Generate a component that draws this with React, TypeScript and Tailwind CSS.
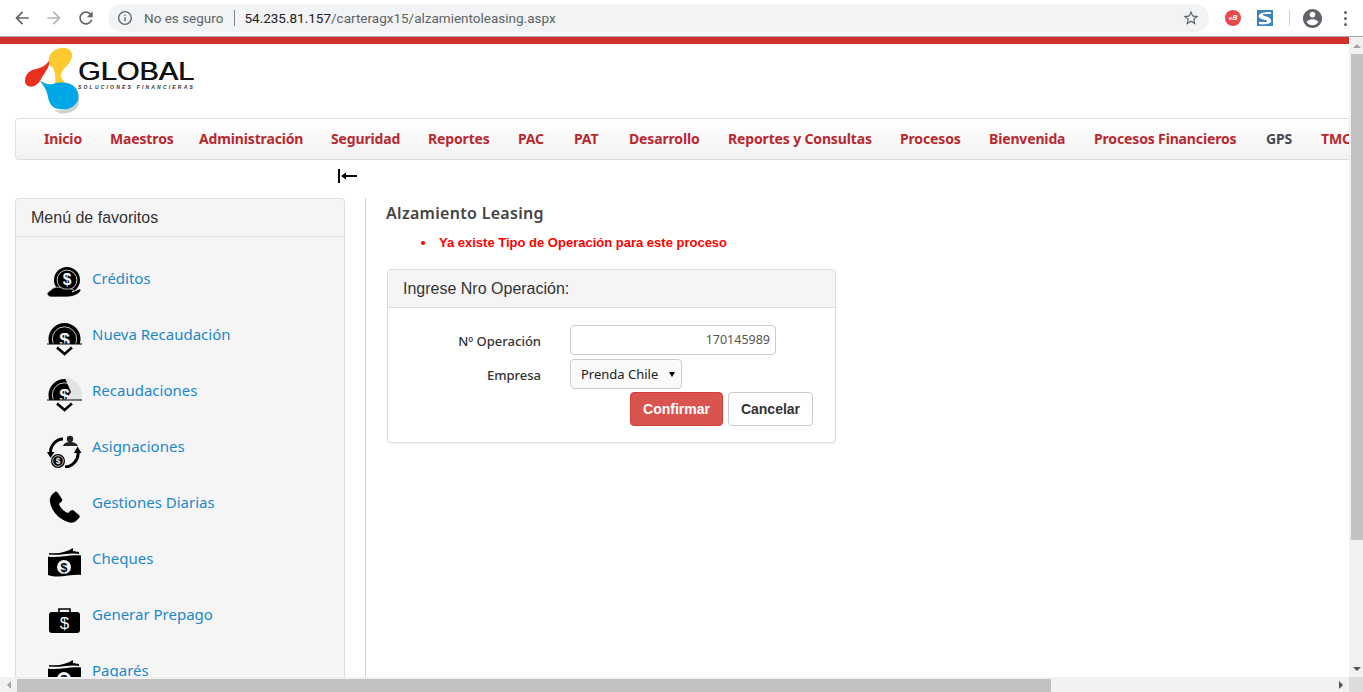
import React, { FC, ReactNode } from "react";

const trebuchet = "font-['Noto_Sans',sans-serif]";

const menuItems = [
  { label: "Inicio", width: "w-[37px]" },
  { label: "Maestros", width: "w-[60px]" },
  { label: "Administración", width: "w-[103px]" },
  { label: "Seguridad", width: "w-[68px]" },
  { label: "Reportes", width: "w-[61px]" },
  { label: "PAC", width: "w-[27px]" },
  { label: "PAT", width: "w-[26px]" },
  { label: "Desarrollo", width: "w-[70px]" },
  { label: "Reportes y Consultas", width: "w-[143px]" },
  { label: "Procesos", width: "w-[60px]" },
  { label: "Bienvenida", width: "w-[76px]" },
  { label: "Procesos Financieros", width: "w-[143px]" },
  { label: "GPS", width: "w-[26px]", dark: true },
  { label: "TMC", width: "w-[30px]" },
];

const Coin: FC<{ cx: number; cy: number; r: number }> = ({ cx, cy, r }) => (
  <g>
    <circle cx={cx} cy={cy} r={r} fill="#000" />
    <circle cx={cx} cy={cy} r={r * 0.76} fill="none" stroke="#f5f5f5" strokeWidth="0.8" />
    <text x={cx} y={cy + r * 0.42} textAnchor="middle" fontSize={r * 1.2} fontWeight="700" fill="#f5f5f5" fontFamily="Liberation Sans">$</text>
  </g>
);

const IconCreditos = () => (
  <svg width="36" height="34" viewBox="0 0 36 34">
    <Coin cx={20} cy={14} r={13} />
    <path d="M0 27 L5 23 C9 20 13 21 17 23 L25 23 C27 23 27 25 25 26 L30 24 C33 22 35 23 33 26 C29 30 24 31 18 31 L4 31 C2 31 0 29 0 27 Z" fill="#000" stroke="#f5f5f5" strokeWidth="0.7" />
  </svg>
);

const IconRecaudacion: FC<{ faded?: boolean }> = ({ faded }) => (
  <svg width="36" height="34" viewBox="0 0 36 34">
    <defs>
      <clipPath id={faded ? "half-a" : "half-b"}>
        <rect x="0" y="0" width="36" height="22" />
      </clipPath>
    </defs>
    <g clipPath={`url(#${faded ? "half-a" : "half-b"})`}>
      <Coin cx={17.5} cy={17} r={16} />
      {faded && <path d="M18 0 A17 17 0 0 1 35 17 L35 23 L18 23 L24 14 Z" fill="#e4e4e4" />}
    </g>
    <path d="M0 22 H35" stroke="#000" strokeWidth="1.2" />
    <path d="M10 25.5 L17.5 32 L25 25.5" fill="none" stroke="#000" strokeWidth="2.6" />
  </svg>
);

const IconAsignaciones = () => (
  <svg width="36" height="34" viewBox="0 0 36 34">
    <path d="M3.5 19 C3 12 9 5 16 5" fill="none" stroke="#000" strokeWidth="3" />
    <path d="M0 18 L7.5 18 L3.5 24 Z" fill="#000" />
    <path d="M31 18 C32 26 25 33 18 33" fill="none" stroke="#000" strokeWidth="3" />
    <path d="M27 19 L34.5 19 L30.5 12.5 Z" fill="#000" />
    <circle cx="23" cy="5" r="3.2" fill="#222" />
    <path d="M16 12 C17 6.5 29 6.5 31 12 Z" fill="#222" />
    <Coin cx={11} cy={27} r={7} />
  </svg>
);

const IconTelefono = () => (
  <svg width="34" height="34" viewBox="0 0 34 34">
    <path d="M8 2 C9 1 10 2 11 3 L15 9 C16 11 14 12 12 14 C13 17 17 22 21 23 C23 21 24 20 26 20 L32 25 C33 26 33 27 32 28 L29 31 C27 33 24 33 21 32 C12 29 5 22 3 12 C2 8 5 4 8 2 Z" fill="#000" />
  </svg>
);

const IconBilletes = () => (
  <svg width="35" height="34" viewBox="0 0 35 34">
    <path d="M2 7 C12 8 20 6 26 2 L26 5 L32 6 L32 8 C24 6 12 10 2 8.5 Z" fill="#000" />
    <path d="M1 10.5 C10 12.5 23 8 34 9.5 L34 29 C24 28 11 33 1 29 Z" fill="#000" />
    <circle cx="17" cy="21" r="7" fill="#f5f5f5" />
    <text x="17" y="25.5" textAnchor="middle" fontSize="12.5" fontWeight="700" fill="#000" fontFamily="Liberation Sans">$</text>
  </svg>
);

const IconMaletin = () => (
  <svg width="35" height="34" viewBox="0 0 35 34">
    <path d="M12 10 V7 H23 V10" fill="none" stroke="#000" strokeWidth="1.6" />
    <rect x="2" y="10" width="31" height="21" rx="3" fill="#000" />
    <text x="17.5" y="27" textAnchor="middle" fontSize="17" fill="#f5f5f5" fontFamily="Liberation Sans">$</text>
  </svg>
);

const favorites: { label: string; icon: ReactNode }[] = [
  { label: "Créditos", icon: <IconCreditos /> },
  { label: "Nueva Recaudación", icon: <IconRecaudacion /> },
  { label: "Recaudaciones", icon: <IconRecaudacion faded /> },
  { label: "Asignaciones", icon: <IconAsignaciones /> },
  { label: "Gestiones Diarias", icon: <IconTelefono /> },
  { label: "Cheques", icon: <IconBilletes /> },
  { label: "Generar Prepago", icon: <IconMaletin /> },
  { label: "Pagarés", icon: <IconBilletes /> },
];

const BrowserBar = () => (
  <div className="flex h-[36px] shrink-0 items-center bg-white pl-[12px] pr-[12px] font-['Roboto',sans-serif]">
    <svg width="20" height="20" viewBox="0 0 24 24" fill="#5f6368">
      <path d="M20 11H7.83l5.59-5.59L12 4l-8 8 8 8 1.41-1.41L7.83 13H20v-2z" />
    </svg>
    <svg className="ml-[12px]" width="20" height="20" viewBox="0 0 24 24" fill="#b4b6b9">
      <path d="M12 4l-1.41 1.41L16.17 11H4v2h12.17l-5.58 5.59L12 20l8-8z" />
    </svg>
    <svg className="ml-[12px]" width="20" height="20" viewBox="0 0 24 24" fill="#5f6368">
      <path d="M17.65 6.35C16.2 4.9 14.21 4 12 4c-4.42 0-7.99 3.58-7.99 8s3.57 8 7.99 8c3.73 0 6.84-2.55 7.73-6h-2.08c-.82 2.33-3.04 4-5.65 4-3.31 0-6-2.69-6-6s2.69-6 6-6c1.66 0 3.14.69 4.22 1.78L13 11h7V4l-2.35 2.35z" />
    </svg>
    <div className="ml-[12px] flex h-[28px] w-[1101px] items-center rounded-full bg-[#f1f3f4] pl-[9px] pr-[9px] text-[13.5px]">
      <svg width="16" height="16" viewBox="0 0 24 24" fill="none" stroke="#5f6368" strokeWidth="2">
        <circle cx="12" cy="12" r="9.5" />
        <path d="M12 11v6M12 7v2" />
      </svg>
      <span className="ml-[11px] text-[#5f6368]">No es seguro</span>
      <span className="ml-[11px] h-[16px] w-px bg-[#80868b]" />
      <span className="ml-[9px] text-[#202124]">54.235.81.157</span>
      <span className="text-[#5f6368]">/carteragx15/alzamientoleasing.aspx</span>
      <svg className="ml-auto" width="18" height="18" viewBox="0 0 24 24" fill="#5f6368">
        <path d="M22 9.24l-7.19-.62L12 2 9.19 8.63 2 9.24l5.46 4.73L5.82 21 12 17.27 18.18 21l-1.64-7.03L22 9.24zM12 15.4l-3.76 2.27 1-4.28-3.32-2.88 4.38-.38L12 6.1l1.71 4.04 4.38.38-3.32 2.88 1 4.28L12 15.4z" />
      </svg>
    </div>
    <div className="ml-[16px] flex h-[16px] w-[16px] items-center justify-center rounded-full bg-[#e8474c] text-[8px] font-bold italic text-white">
      «B
    </div>
    <div className="ml-[16px] flex h-[16px] w-[16px] items-center justify-center border border-[#3d85c0] bg-[#3d85c0]">
      <svg width="14" height="14" viewBox="0 0 14 14">
        <path d="M1 4 C3 1 9 1 13 1 V3 H6 C4 3 5 5 7 5 C11 6 14 8 13 11 C12 13 4 14 1 13 V11 H8 C10 11 9 9 7 9 C3 8 0 7 1 4 Z" fill="#fff" />
      </svg>
    </div>
    <span className="ml-[16px] h-[16px] w-px bg-[#d0d2d4]" />
    <svg className="ml-[12px]" width="21" height="21" viewBox="1 1 22 22" fill="#5f6368">
      <path d="M12 2C6.48 2 2 6.48 2 12s4.48 10 10 10 10-4.48 10-10S17.52 2 12 2zm0 3c1.66 0 3 1.34 3 3s-1.34 3-3 3-3-1.34-3-3 1.34-3 3-3zm0 14.2c-2.5 0-4.71-1.28-6-3.22.03-1.99 4-3.08 6-3.08 1.99 0 5.97 1.09 6 3.08-1.29 1.94-3.5 3.22-6 3.22z" />
    </svg>
    <div className="ml-[21px] flex flex-col gap-[3px]">
      <span className="h-[3px] w-[3px] rounded-full bg-[#5f6368]" />
      <span className="h-[3px] w-[3px] rounded-full bg-[#5f6368]" />
      <span className="h-[3px] w-[3px] rounded-full bg-[#5f6368]" />
    </div>
  </div>
);

const Logo = () => (
  <div className="flex h-[74px] items-start pl-[23px] pt-[3px] font-['Liberation_Sans',sans-serif]">
    <svg width="56" height="68" viewBox="0 0 56 68">
      <path d="M47 60 C52 58 55 54 55 50 C58 56 55 64 44 66 C38 67 34 66 32 63 C38 64 43 62 47 60 Z" fill="#d0d0d0" />
      <path d="M27 8 C30 3 37 0 42 1 C48 2 51 7 48 13 C46 18 40 21 38 27 C37 31 40 33 43 37 L32 37 C33 29 32 22 28 19 C25 16 25 12 27 8 Z" fill="#ffca2e" />
      <path d="M2 34 C2 27 7 23 13 22 C18 21 22 19 26 14 C27 18 24 23 21 27 C18 31 17 36 13 38 C9 41 2 40 2 34 Z" fill="#e8301c" />
      <path d="M15 32 C20 36 24 38 30 37 C36 35 44 35 49 38 C56 42 57 50 54 55 C50 62 42 63 36 62 C28 61 26 55 25 50 C24 44 21 38 15 32 Z" fill="#00a7e7" />
    </svg>
    <div className="ml-[-1px] mt-[14px] flex flex-col">
      <span className="origin-left scale-x-[1.16] text-[25px] font-normal leading-[21px] text-[#111] [text-shadow:0.5px_0_0_#111]">GLOBAL</span>
      <span className="mt-[2px] whitespace-nowrap text-[5px] font-bold italic leading-[6px] tracking-[2.2px] text-[#333]">SOLUCIONES FINANCIERAS</span>
    </div>
  </div>
);

const NavBar = () => (
  <div className={`ml-[15px] flex h-[42px] shrink-0 items-center gap-[29px] overflow-hidden rounded-l-[4px] border border-r-0 border-[#e0e0e0] bg-gradient-to-b from-white to-[#f2f2f2] pb-[2px] pl-[28px] text-[14px] font-bold ${trebuchet}`}>
    {menuItems.map((item) => (
      <span
        key={item.label}
        className={`${item.width} shrink-0 whitespace-nowrap tracking-[-0.15px] ${item.dark ? "text-[#444a55]" : "text-[#b8282f]"}`}
      >
        {item.label}
      </span>
    ))}
  </div>
);

const FavoritesPanel = () => (
  <div className="ml-[15px] h-[520px] w-[330px] shrink-0 rounded-t-[4px] border border-[#dddddd] bg-[#f5f5f5]">
    <div className="flex h-[38px] items-center border-b border-[#dddddd] pl-[15px] font-['Liberation_Sans',sans-serif] text-[16px] text-[#333]">
      Menú de favoritos
    </div>
    <div className={`flex flex-col pl-[31px] pt-[26px] text-[15px] text-[#1b88ca] ${trebuchet}`}>
      {favorites.map((fav) => (
        <div key={fav.label} className="flex h-[56px] shrink-0">
          <div className="flex w-[45px] shrink-0 items-start pt-[3px]">{fav.icon}</div>
          <span className="whitespace-nowrap pt-[1px] leading-[28px]">{fav.label}</span>
        </div>
      ))}
    </div>
  </div>
);

const Content = () => (
  <div className="ml-[20px] flex-1 border-l border-[#d4d4d4] pl-[20px] pt-[5px]">
    <h1 className={`text-[16px] font-semibold leading-[20px] tracking-[0.3px] text-[#444] ${trebuchet}`}>Alzamiento Leasing</h1>
    <ul className="ml-[35px] mt-[11px] font-['Liberation_Sans',sans-serif] text-[13px] font-bold leading-[18px] text-[#ff0000]">
      <li className="flex items-center gap-[14px]">
        <span className="h-[4px] w-[4px] rounded-full bg-[#ff0000]" />
        Ya existe Tipo de Operación para este proceso
      </li>
    </ul>
    <div className="ml-px mt-[17px] w-[449px] rounded-[4px] border border-[#dddddd] bg-white shadow-[0_1px_1px_rgba(0,0,0,0.05)]">
      <div className="flex h-[38px] items-center rounded-t-[4px] border-b border-[#dddddd] bg-[#f5f5f5] pl-[15px] font-['Liberation_Sans',sans-serif] text-[16px] text-[#333]">
        Ingrese Nro Operación:
      </div>
      <div className={`flex flex-col pt-[17px] text-[13px] ${trebuchet}`}>
        <div className="flex items-center">
          <span className="w-[153px] pt-[2px] text-right font-medium leading-[28px] text-[#333]">Nº Operación</span>
          <div className="ml-[29px] flex h-[30px] w-[206px] items-center justify-end rounded-[4px] border border-[#cccccc] pr-[5px] text-[12.5px] text-[#555]">
            170145989
          </div>
        </div>
        <div className="mt-[4px] flex items-center">
          <span className="w-[153px] pt-[2px] text-right font-medium leading-[28px] text-[#333]">Empresa</span>
          <div className="ml-[29px] flex h-[30px] w-[112px] items-center rounded-[4px] border border-[#cccccc] bg-[#fafafa] pl-[10px] text-[#222]">
            <span className="pt-[1px]">Prenda Chile</span>
            <span className="ml-[11px] border-x-[3.5px] border-t-[5px] border-x-transparent border-t-black" />
          </div>
        </div>
        <div className="mr-[22px] mt-[3px] flex justify-end gap-[5px] pb-[16px] font-['Liberation_Sans',sans-serif] text-[14px] font-bold">
          <div className="flex h-[34px] w-[93px] items-center justify-center rounded-[4px] border border-[#d43f3a] bg-[#d9534f] text-white">
            Confirmar
          </div>
          <div className="flex h-[34px] w-[85px] items-center justify-center rounded-[4px] border border-[#cccccc] bg-white text-[#333]">
            Cancelar
          </div>
        </div>
      </div>
    </div>
  </div>
);

const VerticalScrollbar = () => (
  <div className="flex w-[14px] shrink-0 flex-col items-end bg-[#f1f1f1] pl-[2px]">
    <div className="flex h-[17px] w-full items-center justify-center">
      <span className="border-x-[4px] border-b-[4px] border-x-transparent border-b-[#a3a3a3]" />
    </div>
    <div className="h-[486px] w-full bg-[#c1c1c1]" />
    <div className="flex-1" />
    <div className="flex h-[17px] w-full items-center justify-center">
      <span className="border-x-[4px] border-t-[4px] border-x-transparent border-t-[#505050]" />
    </div>
  </div>
);

const HorizontalScrollbar = () => (
  <div className="flex h-[15px] shrink-0 items-end bg-[#f1f1f1]">
    <div className="flex h-[15px] w-[17px] items-center justify-center">
      <span className="border-y-[4px] border-r-[4px] border-y-transparent border-r-[#a3a3a3]" />
    </div>
    <div className="h-[13px] w-[1034px] bg-[#c1c1c1]" />
    <div className="flex-1" />
    <div className="flex h-[15px] w-[17px] items-center justify-center">
      <span className="border-y-[4px] border-l-[4px] border-y-transparent border-l-[#505050]" />
    </div>
    <div className="h-[15px] w-[14px] bg-[#dcdcdc]" />
  </div>
);

const App = () => {
  return (
    <div className="flex h-[692px] w-[1363px] flex-col overflow-hidden bg-white">
      <BrowserBar />
      <div className="h-px shrink-0 bg-[#a8a8a8]" />
      <div className="flex min-h-0 flex-1">
        <div className="flex min-w-0 flex-1 flex-col overflow-hidden">
          <div className="h-[7px] shrink-0 bg-[#d2322d]" />
          <Logo />
          <NavBar />
          <div className="flex h-[38px] shrink-0 items-center pb-[6px] pl-[338px]">
            <span className="h-[14px] w-[2px] bg-black" />
            <svg width="17" height="10" viewBox="0 0 17 10">
              <path d="M1 5 L6 1.5 V4 H17 V6 H6 V8.5 Z" fill="#000" />
            </svg>
          </div>
          <div className="flex min-h-0 flex-1 overflow-hidden">
            <FavoritesPanel />
            <Content />
          </div>
        </div>
        <VerticalScrollbar />
      </div>
      <HorizontalScrollbar />
    </div>
  );
};

export default App;
